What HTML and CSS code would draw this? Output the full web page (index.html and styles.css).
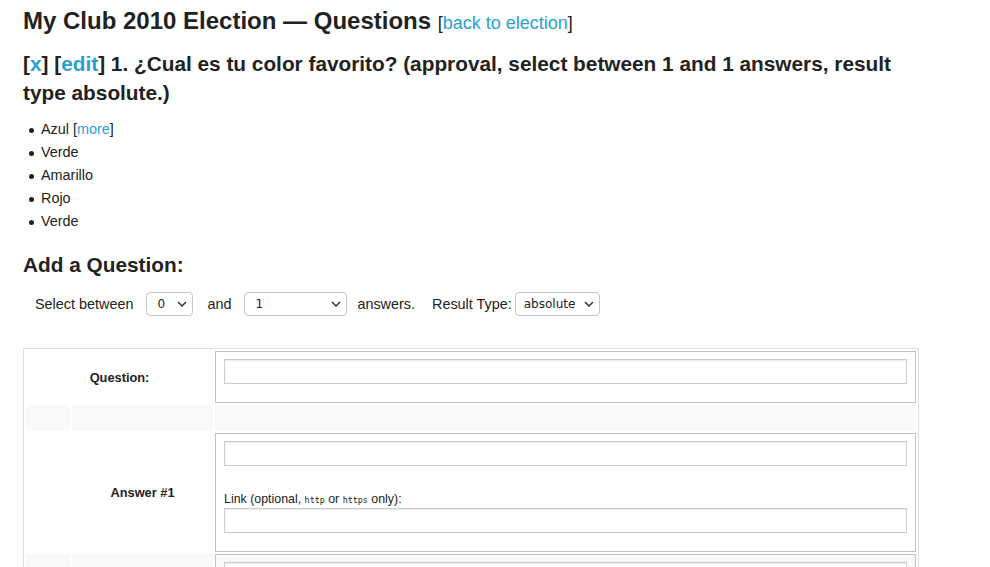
FILE: index.html
```html
<!DOCTYPE html>
<html>
<head>
<meta charset="utf-8">
<title>My Club 2010 Election — Questions</title>
<link rel="stylesheet" href="styles.css">
</head>
<body>
<div class="page">
  <h1 class="title">My Club 2010 Election — Questions <span class="sub">[<a href="#">back to election</a>]</span></h1>
  <h2 class="question">[<a href="#">x</a>] [<a href="#">edit</a>] 1. ¿Cual es tu color favorito? (approval, select between 1 and 1 answers, result type absolute.)</h2>
  <ul class="answers">
    <li>Azul <span class="more">[<a href="#">more</a>]</span></li>
    <li>Verde</li>
    <li>Amarillo</li>
    <li>Rojo</li>
    <li>Verde</li>
  </ul>
  <h3 class="add">Add a Question:</h3>
  <div class="opts">
    <span class="lbl l1">Select between</span>
    <span class="selwrap w1">
      <select class="sel s1"><option>0</option><option>1</option></select>
      <svg class="chev" width="10" height="6" viewBox="0 0 10 6"><path d="M1 1 L5 5 L9 1" fill="none" stroke="#333" stroke-width="1.5"/></svg>
    </span>
    <span class="lbl l2">and</span>
    <span class="selwrap w2">
      <select class="sel s2"><option>1</option><option>2</option></select>
      <svg class="chev" width="10" height="6" viewBox="0 0 10 6"><path d="M1 1 L5 5 L9 1" fill="none" stroke="#333" stroke-width="1.5"/></svg>
    </span>
    <span class="lbl l3">answers.</span>
    <span class="lbl l4">Result Type:</span>
    <span class="selwrap w3">
      <select class="sel s3"><option>absolute</option><option>relative</option></select>
      <svg class="chev" width="10" height="6" viewBox="0 0 10 6"><path d="M1 1 L5 5 L9 1" fill="none" stroke="#333" stroke-width="1.5"/></svg>
    </span>
  </div>
  <table class="qtable">
    <colgroup><col class="c1"><col class="c2"><col class="c3"></colgroup>
    <tr class="r1">
      <th colspan="2" class="lab">Question:</th>
      <td class="box"><input class="txt" type="text"></td>
    </tr>
    <tr class="stripe r2">
      <td></td><td></td><td></td>
    </tr>
    <tr class="r3">
      <td></td>
      <th class="lab">Answer #1</th>
      <td class="box">
        <input class="txt" type="text">
        <div class="linklbl">Link (optional, <code>http</code> or <code>https</code> only):</div>
        <input class="txt" type="text">
      </td>
    </tr>
    <tr class="stripe r3">
      <td></td>
      <th class="lab">Answer #2</th>
      <td class="box">
        <input class="txt" type="text">
        <div class="linklbl">Link (optional, <code>http</code> or <code>https</code> only):</div>
        <input class="txt" type="text">
      </td>
    </tr>
  </table>
</div>
</body>
</html>
```

FILE: styles.css
```css
html, body {
  margin: 0;
  padding: 0;
  background: #fff;
}
body {
  font-family: "Liberation Sans", Arial, sans-serif;
  color: #222;
  font-size: 14.4px;
}
a {
  color: #2a9fd6;
  text-decoration: none;
}
.page {
  padding: 6px 0 0 23px;
  width: 896px;
}
.title {
  margin: 0;
  font-size: 24px;
  line-height: 29px;
  font-weight: bold;
}
.title .sub {
  font-size: 18px;
  font-weight: normal;
}
.question {
  margin: 11px 0 0 0;
  font-size: 20.8px;
  line-height: 29px;
  font-weight: bold;
}
.answers {
  margin: 11px 0 0 0;
  padding-left: 18px;
  line-height: 23px;
  list-style: none;
}
.answers li::before {
  content: "";
  display: inline-block;
  width: 5px;
  height: 5px;
  border-radius: 50%;
  background: #222;
  margin: 0 7px 0 -12px;
  vertical-align: middle;
}
.add {
  margin: 17px 0 0 0;
  font-size: 20.8px;
  line-height: 29px;
  font-weight: bold;
}
.opts {
  margin-top: 13px;
  padding-left: 12px;
  display: flex;
  align-items: center;
  height: 24px;
}
.l1 { margin-right: 13px; }
.l2 { margin-right: 13px; }
.l3 { margin-right: 17px; }
.l4 { margin-right: 3px; }
.selwrap {
  position: relative;
  display: inline-flex;
}
.w1 { margin-right: 14px; }
.w2 { margin-right: 10px; }
.sel {
  -webkit-appearance: none;
  appearance: none;
  font-family: "DejaVu Sans", sans-serif;
  font-size: 12px;
  height: 24px;
  box-sizing: border-box;
  border: 1px solid #c4c4c4;
  border-radius: 4px;
  background: #fff;
  color: #222;
  padding: 0 18px 0 8px;
  margin: 0;
}
.s1, .s2 { padding-left: 10px; }
.chev {
  position: absolute;
  right: 6px;
  top: 9px;
  pointer-events: none;
}
.s1 { width: 47px; }
.s2 { width: 103px; }
.s3 { width: 85px; }
.qtable {
  margin-top: 32px;
  border: 1px solid #ddd;
  border-spacing: 2px;
  table-layout: fixed;
  width: 896px;
}
.c1 { width: 44px; }
.c2 { width: 141px; }
.qtable td, .qtable th {
  padding: 0;
}
.lab {
  font-size: 12.8px;
  font-weight: bold;
  text-align: center;
  vertical-align: middle;
}
.r1 { height: 52px; }
.r2 { height: 26px; }
.stripe td, .stripe th {
  background: #f9f9f9;
}
.qtable td.box {
  border: 1px solid #c2c2c2;
  padding: 7px 8px 18px 8px;
  vertical-align: top;
}
.txt {
  display: block;
  box-sizing: border-box;
  width: 100%;
  height: 25px;
  margin: 0;
  border: 1px solid #cccccc;
  box-shadow: inset 0 1px 1px rgba(0,0,0,0.08);
  background: #fff;
  padding: 2px 4px;
}
.linklbl {
  margin-top: 25px;
  font-size: 12.4px;
  line-height: 16px;
}
.linklbl code {
  font-family: "DejaVu Sans Mono", monospace;
  font-size: 8.4px;
}
```
